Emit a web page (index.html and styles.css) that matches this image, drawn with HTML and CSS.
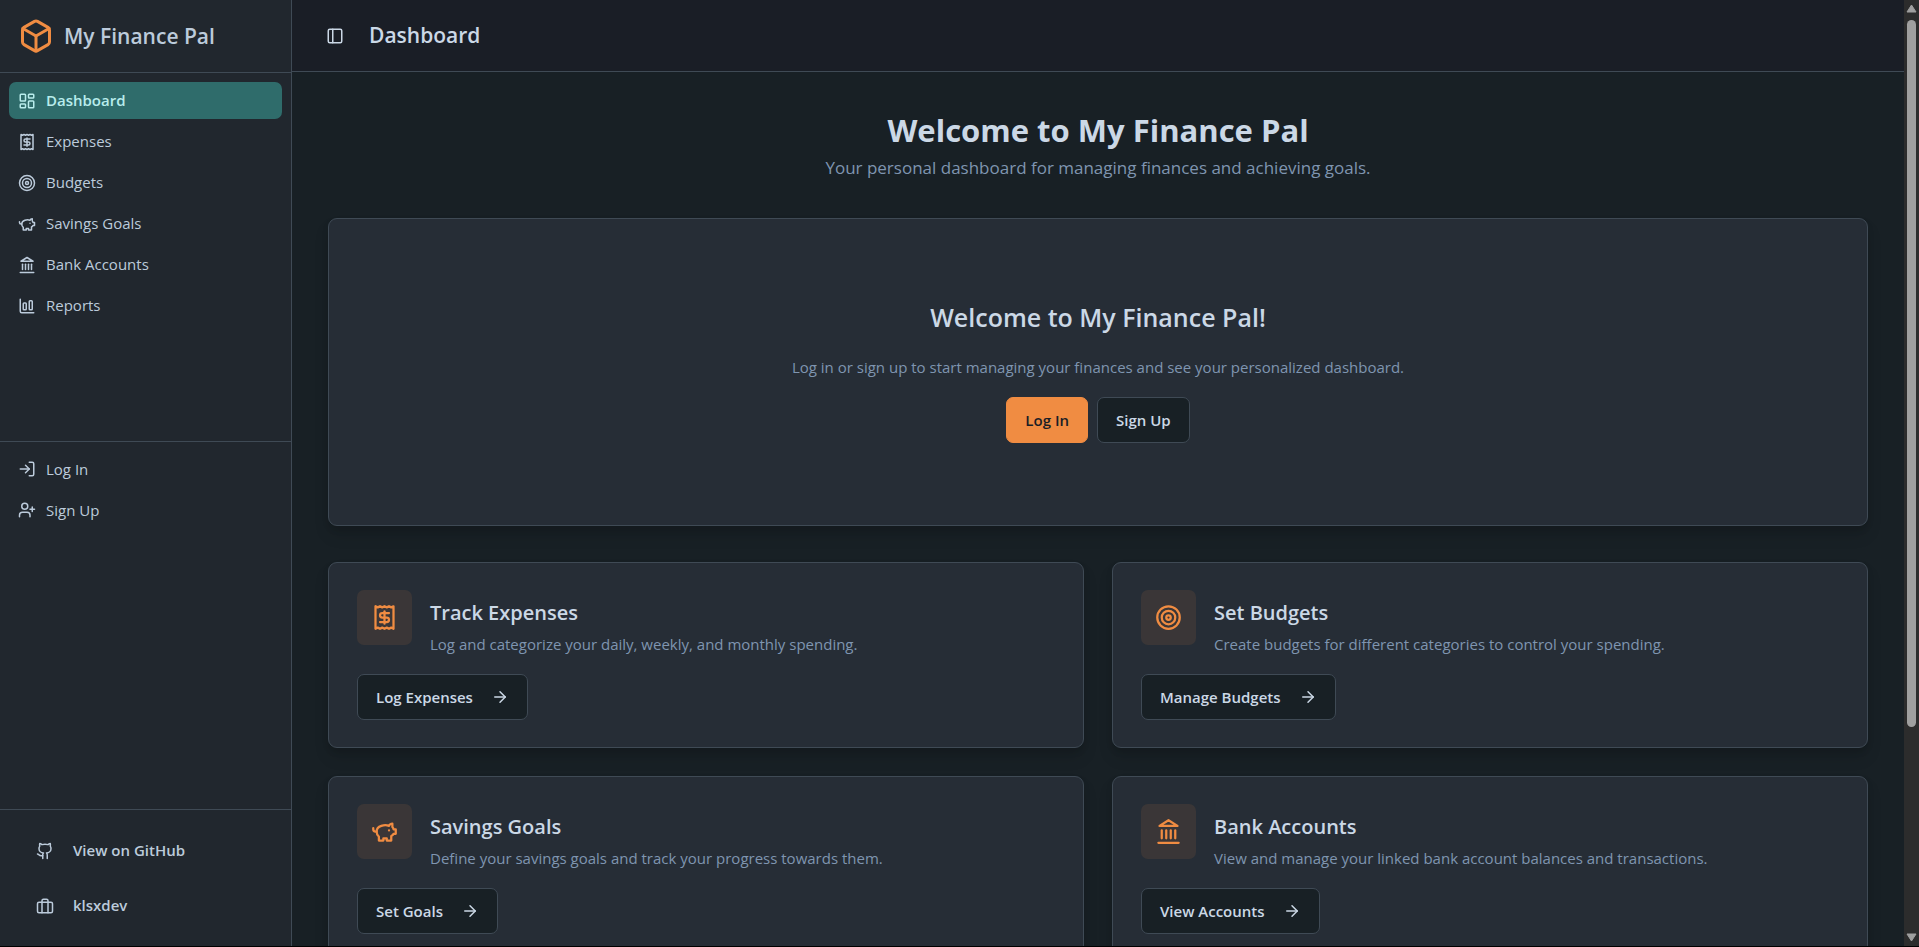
FILE: index.html
```html
<!DOCTYPE html>
<html lang="en">
<head>
<meta charset="utf-8">
<title>My Finance Pal</title>
<meta name="viewport" content="width=device-width, initial-scale=1">
<link rel="stylesheet" href="styles.css">
</head>
<body>
<svg class="sprite" aria-hidden="true">
  <symbol id="box" viewBox="0 0 24 24"><path d="M21 8a2 2 0 0 0-1-1.73l-7-4a2 2 0 0 0-2 0l-7 4A2 2 0 0 0 3 8v8a2 2 0 0 0 1 1.73l7 4a2 2 0 0 0 2 0l7-4A2 2 0 0 0 21 16Z"/><path d="m3.3 7 8.7 5 8.7-5"/><path d="M12 22V12"/></symbol>
  <symbol id="dashboard" viewBox="0 0 24 24"><rect width="7" height="9" x="3" y="3" rx="1"/><rect width="7" height="5" x="14" y="3" rx="1"/><rect width="7" height="9" x="14" y="12" rx="1"/><rect width="7" height="5" x="3" y="16" rx="1"/></symbol>
  <symbol id="receipt" viewBox="0 0 24 24"><path d="M4 2v20l2-1 2 1 2-1 2 1 2-1 2 1 2-1 2 1V2l-2 1-2-1-2 1-2-1-2 1-2-1-2 1Z"/><path d="M16 8h-6a2 2 0 1 0 0 4h4a2 2 0 1 1 0 4H8"/><path d="M12 17.5v-11"/></symbol>
  <symbol id="target" viewBox="0 0 24 24"><circle cx="12" cy="12" r="10"/><circle cx="12" cy="12" r="6"/><circle cx="12" cy="12" r="2"/></symbol>
  <symbol id="piggy" viewBox="0 0 24 24"><path d="M19 5c-1.5 0-2.8 1.4-3 2-3.5-1.5-11-.3-11 5 0 1.8 0 3 2 4.5V20h4v-2h3v2h4v-4c1-.5 1.7-1 2-2h2v-4h-2c0-1-.5-1.5-1-2V5z"/><path d="M2 9v1c0 1.1.9 2 2 2h1"/><path d="M16 11h.01"/></symbol>
  <symbol id="bank" viewBox="0 0 24 24"><path d="M3 22h18"/><path d="M6 18v-7"/><path d="M10 18v-7"/><path d="M14 18v-7"/><path d="M18 18v-7"/><path d="m12 2 8 5H4Z"/></symbol>
  <symbol id="chart" viewBox="0 0 24 24"><path d="M3 3v16a2 2 0 0 0 2 2h16"/><rect x="15" y="5" width="4" height="12" rx="1"/><rect x="7" y="8" width="4" height="9" rx="1"/></symbol>
  <symbol id="login" viewBox="0 0 24 24"><path d="M15 3h4a2 2 0 0 1 2 2v14a2 2 0 0 1-2 2h-4"/><path d="m10 17 5-5-5-5"/><path d="M15 12H3"/></symbol>
  <symbol id="user-plus" viewBox="0 0 24 24"><path d="M16 21v-2a4 4 0 0 0-4-4H6a4 4 0 0 0-4 4v2"/><circle cx="9" cy="7" r="4"/><path d="M19 8v6"/><path d="M22 11h-6"/></symbol>
  <symbol id="github" viewBox="0 0 24 24"><path d="M15 22v-4a4.8 4.8 0 0 0-1-3.5c3 0 6-2 6-5.5.08-1.25-.27-2.48-1-3.5.28-1.15.28-2.35 0-3.5 0 0-1 0-3 1.5-2.64-.5-5.36-.5-8 0C6 2 5 2 5 2c-.3 1.15-.3 2.35 0 3.5A5.403 5.403 0 0 0 4 9c0 3.5 3 5.5 6 5.5-.39.49-.68 1.05-.85 1.65-.17.6-.22 1.23-.15 1.85v4"/><path d="M9 18c-4.51 2-5-2-7-2"/></symbol>
  <symbol id="briefcase" viewBox="0 0 24 24"><rect width="20" height="14" x="2" y="7" rx="2"/><path d="M16 21V5a2 2 0 0 0-2-2h-4a2 2 0 0 0-2 2v16"/></symbol>
  <symbol id="panel" viewBox="0 0 24 24"><rect width="18" height="18" x="3" y="3" rx="2"/><path d="M9 3v18"/></symbol>
  <symbol id="arrow" viewBox="0 0 24 24"><path d="M5 12h14"/><path d="m12 5 7 7-7 7"/></symbol>
</svg>
<div class="app">
  <aside class="sidebar">
    <div class="brand"><svg class="icon icon-brand"><use href="#box"/></svg><span>My Finance Pal</span></div>
    <nav class="group" aria-label="Main">
      <a class="item active" href="#" aria-current="page"><svg class="icon"><use href="#dashboard"/></svg>Dashboard</a>
      <a class="item" href="#"><svg class="icon"><use href="#receipt"/></svg>Expenses</a>
      <a class="item" href="#"><svg class="icon"><use href="#target"/></svg>Budgets</a>
      <a class="item" href="#"><svg class="icon"><use href="#piggy"/></svg>Savings Goals</a>
      <a class="item" href="#"><svg class="icon"><use href="#bank"/></svg>Bank Accounts</a>
      <a class="item" href="#"><svg class="icon"><use href="#chart"/></svg>Reports</a>
    </nav>
    <nav class="group ruled" aria-label="Account">
      <a class="item" href="#"><svg class="icon"><use href="#login"/></svg>Log In</a>
      <a class="item" href="#"><svg class="icon"><use href="#user-plus"/></svg>Sign Up</a>
    </nav>
    <div class="links">
      <a class="link" href="#"><svg class="icon"><use href="#github"/></svg>View on GitHub</a>
      <a class="link" href="#"><svg class="icon"><use href="#briefcase"/></svg>klsxdev</a>
    </div>
  </aside>
  <div class="page">
    <header class="topbar">
      <button class="toggle" type="button" aria-label="Toggle sidebar"><svg class="icon"><use href="#panel"/></svg></button>
      <span class="topbar-title">Dashboard</span>
    </header>
    <main class="content">
      <div class="intro">
        <h1>Welcome to My Finance Pal</h1>
        <p>Your personal dashboard for managing finances and achieving goals.</p>
      </div>
      <section class="card welcome">
        <h2>Welcome to My Finance Pal!</h2>
        <p>Log in or sign up to start managing your finances and see your personalized dashboard.</p>
        <div class="actions">
          <button class="btn primary" type="button">Log In</button>
          <button class="btn" type="button">Sign Up</button>
        </div>
      </section>
      <div class="features">
        <section class="card feature">
          <div class="feature-head">
            <span class="badge"><svg class="icon icon-badge"><use href="#receipt"/></svg></span>
            <div class="feature-text"><h3>Track Expenses</h3><p>Log and categorize your daily, weekly, and monthly spending.</p></div>
          </div>
          <button class="btn" type="button">Log Expenses<svg class="icon"><use href="#arrow"/></svg></button>
        </section>
        <section class="card feature">
          <div class="feature-head">
            <span class="badge"><svg class="icon icon-badge"><use href="#target"/></svg></span>
            <div class="feature-text"><h3>Set Budgets</h3><p>Create budgets for different categories to control your spending.</p></div>
          </div>
          <button class="btn" type="button">Manage Budgets<svg class="icon"><use href="#arrow"/></svg></button>
        </section>
        <section class="card feature">
          <div class="feature-head">
            <span class="badge"><svg class="icon icon-badge"><use href="#piggy"/></svg></span>
            <div class="feature-text"><h3>Savings Goals</h3><p>Define your savings goals and track your progress towards them.</p></div>
          </div>
          <button class="btn" type="button">Set Goals<svg class="icon"><use href="#arrow"/></svg></button>
        </section>
        <section class="card feature">
          <div class="feature-head">
            <span class="badge"><svg class="icon icon-badge"><use href="#bank"/></svg></span>
            <div class="feature-text"><h3>Bank Accounts</h3><p>View and manage your linked bank account balances and transactions.</p></div>
          </div>
          <button class="btn" type="button">View Accounts<svg class="icon"><use href="#arrow"/></svg></button>
        </section>
      </div>
    </main>
  </div>
  <div class="scrollbar" aria-hidden="true">
    <svg class="scroll-arrow" viewBox="0 0 11 9"><path d="M5.500 1 10 8H1Z"/></svg>
    <div class="track"><div class="thumb"></div></div>
    <svg class="scroll-arrow" viewBox="0 0 11 9"><path d="M5.500 8 10 1H1Z"/></svg>
  </div>
</div>
</body>
</html>
```
FILE: styles.css
```css
:root {
  --line: #3f4a55;
  --text: #cbd8e6;
  --nav: #bccbdb;
  --muted: #7f95b0;
  --base: #182025;
  --panel: #262d36;
  --accent: #f08c42;
}
* { box-sizing: border-box; }
body {
  margin: 0;
  height: 100vh;
  padding-bottom: 1px;
  overflow: hidden;
  background: #000;
  color: var(--text);
  font: 15px/27px "Open Sans", "Noto Sans", sans-serif;
}
h1, h2, h3, p { margin: 0; }
a { color: inherit; text-decoration: none; }
.sprite { display: none; }
.icon {
  width: 18px;
  height: 18px;
  flex: none;
  fill: none;
  stroke: currentColor;
  stroke-width: 2;
  stroke-linecap: round;
  stroke-linejoin: round;
}
.app { display: flex; height: 100%; background: var(--base); }

.sidebar {
  display: flex;
  flex-direction: column;
  flex: none;
  width: 292px;
  background: #21272e;
  border-right: 1px solid var(--line);
  color: var(--nav);
}
.brand {
  display: flex;
  align-items: center;
  gap: 10px;
  height: 73px;
  padding: 0 18px;
  border-bottom: 1px solid var(--line);
  font-size: 21px;
  font-weight: 600;
}
.icon-brand { width: 36px; height: 36px; color: var(--accent); }
.group {
  display: flex;
  flex-direction: column;
  flex: 1;
  gap: 4px;
  padding: 9px;
}
.ruled { border-top: 1px solid var(--line); }
.item {
  display: flex;
  align-items: center;
  gap: 10px;
  height: 37px;
  padding: 0 9px;
  border-radius: 7px;
}
.active { background: #2f6c6b; color: #b8ecec; font-weight: 600; }
.links {
  display: flex;
  flex-direction: column;
  gap: 10px;
  padding: 18px;
  border-top: 1px solid var(--line);
}
.link {
  display: flex;
  align-items: center;
  gap: 19px;
  height: 45px;
  padding: 0 18px;
  font-weight: 600;
}

.page { flex: 1; min-width: 0; overflow: hidden; }
.topbar {
  display: flex;
  align-items: center;
  gap: 18px;
  height: 72px;
  padding: 0 27px;
  background: #1a1e26;
  border-bottom: 1px solid var(--line);
}
.toggle {
  display: grid;
  place-items: center;
  width: 32px;
  height: 32px;
  padding: 0;
  border: 0;
  background: none;
  color: var(--text);
}
.topbar-title { font-size: 21px; font-weight: 600; }
.content { display: flex; flex-direction: column; gap: 36px; padding: 36px; }
.intro { text-align: center; }
.intro h1 { font-size: 31px; line-height: 44px; font-weight: 700; }
.intro p { padding-top: 2px; font-size: 17px; line-height: 28px; color: var(--muted); }

.card {
  background: var(--panel);
  border: 1px solid var(--line);
  border-radius: 9px;
  box-shadow: 0 10px 15px rgba(0, 0, 0, 0.1), 0 4px 6px rgba(0, 0, 0, 0.1);
}
.card p { color: var(--muted); }
.welcome {
  display: flex;
  flex-direction: column;
  align-items: center;
  justify-content: center;
  gap: 16px;
  min-height: 308px;
  padding-bottom: 2px;
  text-align: center;
}
.welcome h2 { padding-bottom: 3px; font-size: 25px; line-height: 36px; font-weight: 600; }
.actions { display: flex; gap: 9px; }
.btn {
  display: inline-flex;
  align-items: center;
  gap: 18px;
  height: 46px;
  padding: 0 18px;
  border: 1px solid var(--line);
  border-radius: 7px;
  background: var(--base);
  color: var(--text);
  font: inherit;
  font-weight: 600;
}
.primary { background: var(--accent); border-color: var(--accent); color: #1a1e26; }

.features { display: grid; grid-template-columns: 1fr 1fr; gap: 28px; }
.feature { padding: 27px 28px; }
.feature-head { display: flex; align-items: flex-start; gap: 18px; margin-bottom: 16px; }
.badge {
  display: grid;
  place-items: center;
  flex: none;
  width: 55px;
  height: 55px;
  border-radius: 7px;
  background: #3a3637;
  color: var(--accent);
}
.icon-badge { width: 27px; height: 27px; }
.feature-text { padding-top: 5px; }
.feature-text h3 { font-size: 20px; line-height: 36px; font-weight: 600; }

.scrollbar {
  display: flex;
  flex-direction: column;
  align-items: center;
  flex: none;
  width: 15px;
  padding: 4px 0;
  background: #2c2c2c;
}
.scroll-arrow {
  width: 11px;
  height: 9px;
  fill: #9f9f9f;
  stroke: #9f9f9f;
  stroke-width: 1;
  stroke-linejoin: round;
}
.track { flex: 1; width: 9px; padding: 7px 0; }
.thumb { height: 78%; border-radius: 5px; background: #9f9f9f; }
```
